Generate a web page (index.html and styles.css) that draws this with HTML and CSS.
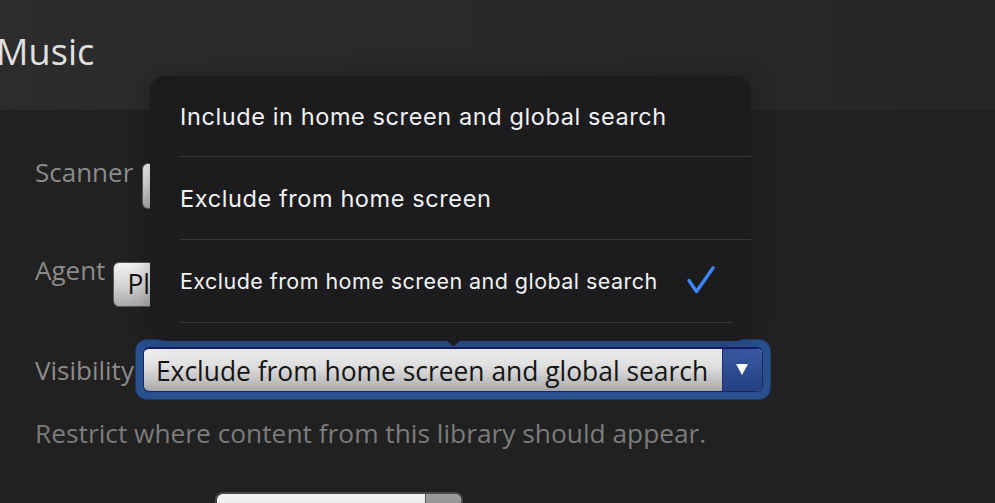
FILE: index.html
```html
<!DOCTYPE html>
<html>
<head>
<meta charset="utf-8">
<link rel="stylesheet" href="styles.css">
</head>
<body>
<div class="page">
  <header class="header">
    <h1 class="title">Music</h1>
  </header>
  <main class="form">
    <div class="row row-scanner">
      <span class="label">Scanner</span>
      <div class="select select-plain"><span class="select-text">Plex Music Scanner</span><span class="select-btn"></span></div>
    </div>
    <div class="row row-agent">
      <span class="label">Agent</span>
      <div class="select select-plain select-agent"><span class="select-text">Plex Music</span><span class="select-btn"></span></div>
    </div>
    <div class="row row-visibility">
      <span class="label">Visibility</span>
      <div class="focus-ring">
        <div class="select select-active"><span class="select-text">Exclude from home screen and global search</span><span class="select-btn select-btn-blue"><span class="tri"></span></span></div>
      </div>
    </div>
    <p class="help">Restrict where content from this library should appear.</p>
    <div class="row row-bottom">
      <div class="select select-plain select-bottom"><span class="select-text"></span><span class="select-btn"></span></div>
    </div>
  </main>

  <div class="popover">
    <div class="arrow"></div>
    <ul class="options">
      <li class="option">Include in home screen and global search</li>
      <li class="option">Exclude from home screen</li>
      <li class="option option-selected"><span class="option-text">Exclude from home screen and global search</span>
        <svg class="check" width="30" height="30" viewBox="0 0 30 30"><path d="M3 15.5 L10.5 26.5 L27 3" fill="none" stroke="#3f86f7" stroke-width="3.4" stroke-linecap="round" stroke-linejoin="round"/></svg>
      </li>
    </ul>
  </div>
</div>
</body>
</html>
```

FILE: styles.css
```css
* { box-sizing: border-box; }
html, body { margin: 0; padding: 0; }
body {
  background: #212121;
  font-family: "Open Sans", "Liberation Sans", sans-serif;
  width: 995px;
  height: 503px;
  overflow: hidden;
}
.page {
  position: relative;
  width: 995px;
  height: 503px;
  overflow: hidden;
  background: #212121;
}
.header {
  height: 111px;
  background: linear-gradient(90deg, #2c2c2c 0%, #2a2a2a 40%, #262626 100%);
  border-bottom: 1px solid #1d1d1d;
  display: flex;
  align-items: flex-start;
}
.title {
  margin: 26px 0 0 -4px;
  font-weight: 400;
  font-size: 36px;
  line-height: 52px;
  color: #e0e0e0;
  letter-spacing: 0.1px;
}
.form {
  padding: 0 0 0 35px;
  display: flex;
  flex-direction: column;
}
.row {
  display: flex;
  align-items: flex-start;
}
.label {
  font-size: 26px;
  line-height: 30px;
  color: #8b8b8b;
}
.row-scanner { margin-top: 52px; }
.row-scanner .label { margin-top: -6px; margin-right: 9px; }
.row-agent { margin-top: 53px; }
.row-agent .label { margin-top: -7px; margin-right: 8px; }
.row-visibility { margin-top: 33px; }
.row-visibility .label { margin-top: 15px; margin-right: 1px; }

.select {
  display: flex;
  align-items: stretch;
  border-radius: 6px;
  overflow: hidden;
}
.select-plain {
  width: 420px;
  height: 46px;
  background: linear-gradient(180deg, #f2f2f2 0%, #d6d6d6 50%, #a9a9a9 100%);
  border: 1px solid #5a5a5a;
}
.select-agent { height: 45px; }
.select-text {
  flex: 1;
  font-size: 26.4px;
  line-height: 43px;
  color: #141414;
  padding-left: 13px;
  white-space: nowrap;
}
.select-btn {
  width: 38px;
  background: linear-gradient(180deg, #9a9a9a, #6a6a6a);
  border-left: 1px solid #555;
}
.focus-ring {
  background: #28508e;
  border-radius: 12px;
  padding: 7px;
  width: 636px;
  height: 61px;
  border: 1px solid #1e3a6a;
  margin-top: -1px;
}
.select-active {
  width: 620px;
  height: 45px;
  background: linear-gradient(180deg, #f6f6f6 0%, #dcdcdc 45%, #bdbdbd 80%, #a4a4a4 100%);
  border: 1px solid #1b2560;
  border-top: 2px solid #141d6a;
}
.select-active .select-text { line-height: 44px; padding-left: 12px; }
.select-btn-blue {
  width: 40px;
  background: linear-gradient(180deg, #3a5aa3 0%, #2c4a90 60%, #263f80 100%);
  border-left: 1px solid #1c2f70;
  display: flex;
  align-items: center;
  justify-content: center;
}
.tri {
  width: 0;
  height: 0;
  border-left: 6px solid transparent;
  border-right: 6px solid transparent;
  border-top: 11px solid #ffffff;
  margin-top: -2px;
}
.help {
  margin: 17px 0 0 0;
  font-size: 26.3px;
  line-height: 32px;
  color: #7c7c7c;
}
.row-bottom { margin-top: 43px; padding-left: 180px; }
.select-bottom {
  width: 248px;
  height: 40px;
  border-radius: 8px;
  background: linear-gradient(180deg, #f3f3f3 0%, #dcdcdc 100%);
  border: 2px solid #4a4a4a;
}
.select-bottom .select-btn {
  background: linear-gradient(180deg, #9c9c9c, #8a8a8a);
  width: 36px;
}

.popover {
  position: absolute;
  left: 150px;
  top: 76px;
  width: 601px;
  height: 265px;
  background: #1c1c1e;
  border-radius: 15px;
  box-shadow: 0 0 24px rgba(0,0,0,0.25);
  font-family: "Inter", "Roboto", sans-serif;
}
.options {
  position: relative;
  list-style: none;
  margin: 0;
  padding: 0 0 0 30px;
}
.option {
  height: 83px;
  display: flex;
  align-items: center;
  font-size: 23.5px;
  color: #f2f2f2;
  border-bottom: 1px solid #38383a;
  letter-spacing: 0.6px;
}
.option:first-child { height: 81px; }
.option-selected {
  margin-right: 18px;
  font-size: 21.5px;
  letter-spacing: 0.45px;
}
.option-text { flex: none; }
.check { margin-left: 28px; margin-top: -2px; }
.arrow {
  position: absolute;
  left: 291px;
  bottom: -1px;
  width: 25px;
  height: 25px;
  background: #1c1c1e;
  transform: rotate(45deg);
  border-radius: 4px;
}
```
